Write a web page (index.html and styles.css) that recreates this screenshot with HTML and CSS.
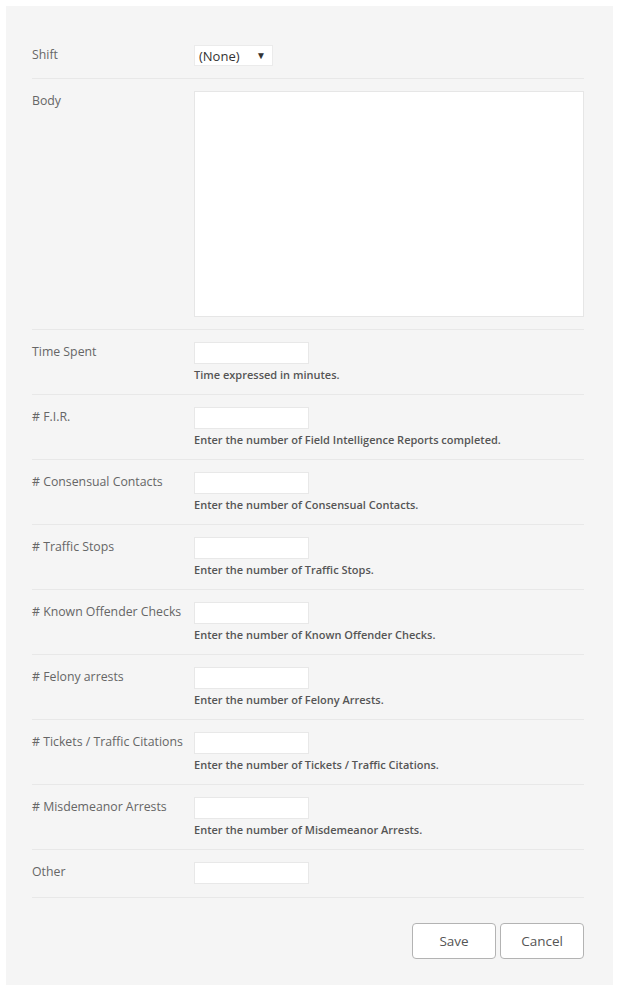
FILE: index.html
```html
<!DOCTYPE html>
<html lang="en">
<head>
<meta charset="utf-8">
<title>Activity Form</title>
<link rel="stylesheet" href="styles.css">
</head>
<body>
<form class="panel">
  <div class="row">
    <label class="label">Shift</label>
    <div class="control">
      <div class="select"><span class="select-text">(None)</span><span class="select-arrow">▼</span></div>
    </div>
  </div>
  <div class="row">
    <label class="label">Body</label>
    <div class="control"><div class="textarea"></div></div>
  </div>
  <div class="row">
    <label class="label">Time Spent</label>
    <div class="control"><div class="input"></div><div class="help">Time expressed in minutes.</div></div>
  </div>
  <div class="row">
    <label class="label"># F.I.R.</label>
    <div class="control"><div class="input"></div><div class="help">Enter the number of Field Intelligence Reports completed.</div></div>
  </div>
  <div class="row">
    <label class="label"># Consensual Contacts</label>
    <div class="control"><div class="input"></div><div class="help">Enter the number of Consensual Contacts.</div></div>
  </div>
  <div class="row">
    <label class="label"># Traffic Stops</label>
    <div class="control"><div class="input"></div><div class="help">Enter the number of Traffic Stops.</div></div>
  </div>
  <div class="row">
    <label class="label"># Known Offender Checks</label>
    <div class="control"><div class="input"></div><div class="help">Enter the number of Known Offender Checks.</div></div>
  </div>
  <div class="row">
    <label class="label"># Felony arrests</label>
    <div class="control"><div class="input"></div><div class="help">Enter the number of Felony Arrests.</div></div>
  </div>
  <div class="row">
    <label class="label"># Tickets / Traffic Citations</label>
    <div class="control"><div class="input"></div><div class="help">Enter the number of Tickets / Traffic Citations.</div></div>
  </div>
  <div class="row">
    <label class="label"># Misdemeanor Arrests</label>
    <div class="control"><div class="input"></div><div class="help">Enter the number of Misdemeanor Arrests.</div></div>
  </div>
  <div class="row row-last">
    <label class="label">Other</label>
    <div class="control"><div class="input"></div></div>
  </div>
  <div class="actions">
    <button type="button" class="btn">Save</button>
    <button type="button" class="btn">Cancel</button>
  </div>
</form>
</body>
</html>
```

FILE: styles.css
```css
html, body {
  margin: 0;
  padding: 0;
  background: #ffffff;
}

body {
  font-family: "Segoe UI", "Open Sans", sans-serif;
  color: #666666;
}

.panel {
  margin: 6px;
  width: 607px;
  height: 979px;
  box-sizing: border-box;
  background: #f5f5f5;
  padding: 27px 29px 0 26px;
}

.row {
  display: grid;
  grid-template-columns: 162px 1fr;
  padding: 12px 0;
  border-bottom: 1px solid #e8e8e8;
}

.row-last {
  padding-bottom: 13px;
}

.label {
  font-size: 12.3px;
  line-height: 18px;
  padding-top: 1px;
  color: #666666;
}

.control {
  display: flex;
  flex-direction: column;
  align-items: flex-start;
}

.select {
  box-sizing: border-box;
  width: 79px;
  height: 21px;
  background: #ffffff;
  border: 1px solid #ebebeb;
  display: flex;
  align-items: center;
  justify-content: space-between;
  padding: 0 6px 0 4px;
}

.select-text {
  font-size: 13px;
  color: #333333;
  line-height: 19px;
  padding-top: 1px;
}

.select-arrow {
  font-size: 10px;
  color: #333333;
  line-height: 19px;
}

.textarea {
  box-sizing: border-box;
  width: 390px;
  height: 226px;
  background: #ffffff;
  border: 1px solid #e6e6e6;
}

.input {
  box-sizing: border-box;
  width: 115px;
  height: 22px;
  background: #ffffff;
  border: 1px solid #e8e8e8;
}

.help {
  font-size: 11px;
  font-weight: 600;
  line-height: 18px;
  color: #555555;
  margin-top: 2px;
  height: 16px;
}

.actions {
  display: flex;
  justify-content: flex-end;
  gap: 4px;
  padding-top: 25px;
}

.btn {
  box-sizing: border-box;
  width: 84px;
  height: 36px;
  background: #ffffff;
  border: 1px solid #b3b3b3;
  border-radius: 4px;
  font-family: "Segoe UI", "Open Sans", sans-serif;
  font-size: 13.5px;
  color: #555555;
  padding: 0;
}
```
